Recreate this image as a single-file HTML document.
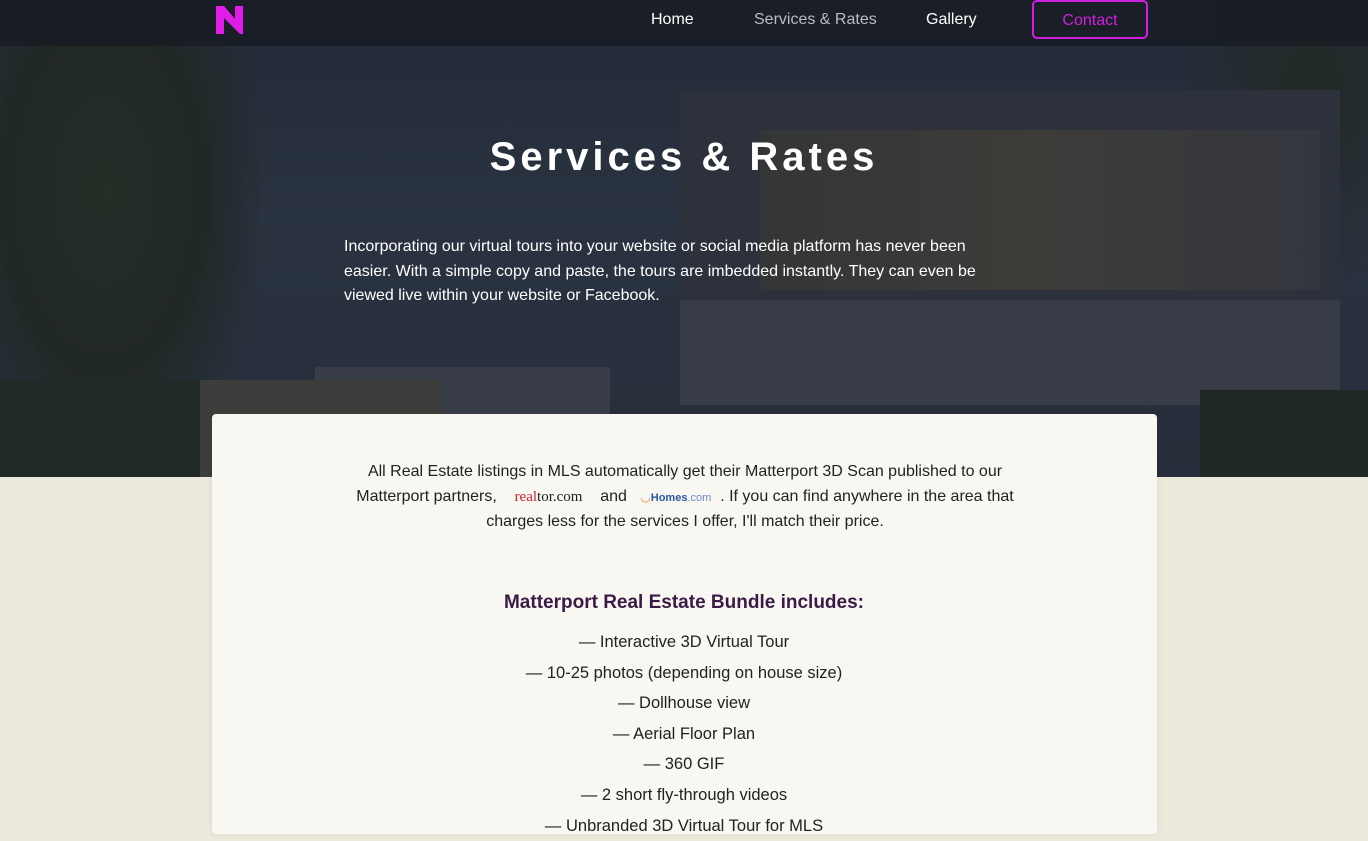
<!DOCTYPE html>
<html><head><meta charset="utf-8"><style>
*{margin:0;padding:0;box-sizing:border-box}
body{width:1368px;height:820px;overflow:hidden;background:#edeadd;font-family:"Liberation Sans",sans-serif;position:relative}
.hero{position:absolute;left:0;top:0;width:1368px;height:477px;background:linear-gradient(180deg,#2c3440 0%,#3a4452 45%,#333b47 100%);overflow:hidden}
.b{position:absolute}
.nav{position:absolute;left:0;top:0;width:1368px;height:46px;background:rgba(24,28,36,.85)}
.nav a{position:absolute;top:11px;font-size:16px;color:#fff;text-decoration:none}
.card{position:absolute;left:212px;top:414px;width:945px;height:420px;background:#f8f7f2;border-radius:4px;box-shadow:0 0 8px rgba(0,0,0,.08)}
.t{position:absolute;text-align:center;color:#222;font-size:16px}
</style></head><body>
<div class="hero">
 <div class="b" style="left:0;top:0;width:260px;height:477px;background:radial-gradient(ellipse at 40% 40%,#2e3a22 0%,#273020 45%,rgba(40,50,35,0) 75%)"></div>
 <div class="b" style="left:1180px;top:0;width:188px;height:300px;background:radial-gradient(ellipse at 70% 30%,#28321f 0%,rgba(40,50,35,0) 70%)"></div>
 <div class="b" style="left:680px;top:90px;width:660px;height:210px;background:#3d4148"></div>
 <div class="b" style="left:760px;top:130px;width:560px;height:160px;background:linear-gradient(90deg,#4b4840,#5d5444 50%,#4a4a4c)"></div>
 <div class="b" style="left:680px;top:300px;width:660px;height:105px;background:#52555d"></div>
 <div class="b" style="left:315px;top:367px;width:295px;height:110px;background:#54565e"></div>
 <div class="b" style="left:190px;top:380px;width:250px;height:97px;background:#5c5648"></div>
 <div class="b" style="left:1200px;top:390px;width:168px;height:87px;background:#26301f"></div>
 <div class="b" style="left:0;top:380px;width:200px;height:97px;background:#2a3324"></div>
 <div class="b" style="left:0;top:0;width:1368px;height:477px;background:rgba(25,32,45,.45)"></div>
</div>
<div class="nav">
 <svg style="position:absolute;left:216px;top:6px" width="27" height="28" viewBox="0 0 27 28"><path d="M0 0h8l11 13V0h8v28h-3L8 12v16H0z" fill="#e11ce8"/></svg>
 <a style="left:651px">Home</a>
 <a style="left:754px;color:#b9bcc3">Services &amp; Rates</a>
 <a style="left:926px">Gallery</a>
 <div style="position:absolute;left:1032px;top:0;width:116px;height:39px;border:2px solid #d21ee0;border-radius:5px;color:#d21ee0;font-size:16px;text-align:center;line-height:37px">Contact</div>
</div>
<div class="t" style="left:0;width:1368px;top:135px;font-size:40px;font-weight:bold;color:#fff;letter-spacing:4px">Services &amp; Rates</div>
<div style="position:absolute;left:344px;top:235px;width:660px;color:#fff;font-size:16px;line-height:24.5px">Incorporating our virtual tours into your website or social media platform has never been easier. With a simple copy and paste, the tours are imbedded instantly. They can even be viewed live within your website or Facebook.</div>
<div class="card"></div>
<div class="t" style="left:340px;width:690px;top:460px;line-height:24.5px">All Real Estate listings in MLS automatically get their Matterport 3D Scan published to our Matterport partners, &nbsp;&nbsp;&nbsp;<span style="font-family:'Liberation Serif',serif;color:#d0212f;font-size:15px">real</span><span style="font-family:'Liberation Serif',serif;color:#222;font-size:15px">tor.com</span>&nbsp;&nbsp;&nbsp; and &nbsp;&nbsp;<span style="color:#f08a1c;font-size:12px">◡</span><span style="color:#2a56a8;font-size:11px;font-weight:bold">Homes</span><span style="color:#6b8cc8;font-size:11px">.com</span>&nbsp; . If you can find anywhere in the area that charges less for the services I offer, I'll match their price.</div>
<div class="t" style="left:0;width:1368px;top:592px;font-size:19px;font-weight:bold;color:#3b1a45">Matterport Real Estate Bundle includes:</div>
<div class="t" style="left:0;width:1368px;top:627px;line-height:30.6px;font-size:16.5px">— Interactive 3D Virtual Tour<br>— 10-25 photos (depending on house size)<br>— Dollhouse view<br>— Aerial Floor Plan<br>— 360 GIF<br>— 2 short fly-through videos<br>— Unbranded 3D Virtual Tour for MLS</div>
</body></html>
